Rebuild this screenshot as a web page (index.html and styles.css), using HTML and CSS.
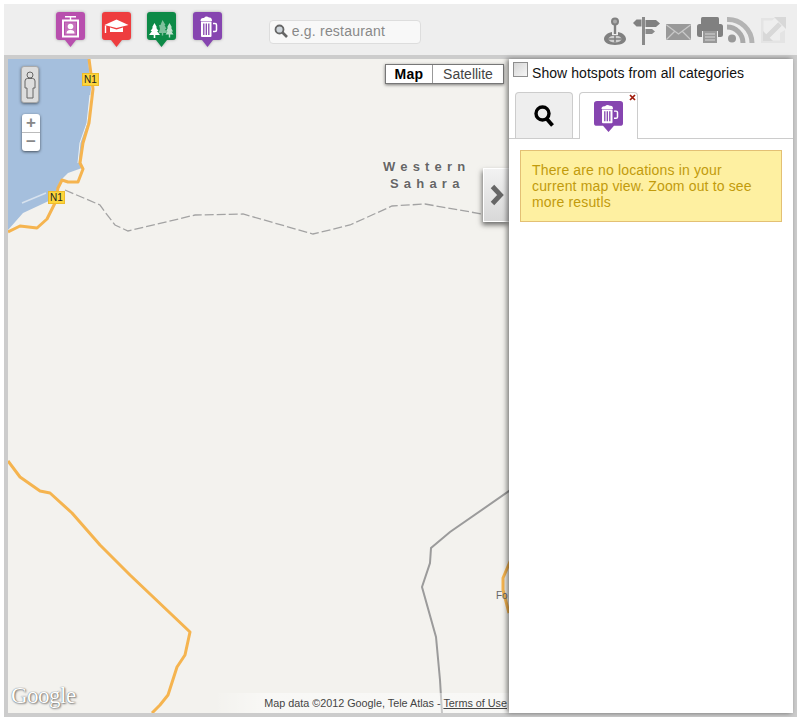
FILE: index.html
```html
<!DOCTYPE html>
<html lang="en">
<head>
<meta charset="utf-8">
<title>Hotspots map</title>
<link rel="stylesheet" href="styles.css">
</head>
<body>
<div class="app">
  <header class="toolbar">
    <div class="categories">
      <svg class="marker" width="29" height="35" viewBox="0 0 29 35">
        <path class="m-pink" d="M3 0H26a3 3 0 0 1 3 3V25a3 3 0 0 1-3 3H20L14.5 35 9 28H3a3 3 0 0 1-3-3V3a3 3 0 0 1 3-3Z"/>
        <path d="M9 4H20V5.500H15.200V8H13.800V5.500H9Z" fill="#fff"/>
        <rect x="7" y="8.500" width="15" height="16" fill="none" stroke="#fff" stroke-width="2"/>
        <rect x="9" y="10.500" width="11" height="12" fill="#c572bc"/>
        <circle cx="14.500" cy="14.500" r="2.800" fill="#fff"/>
        <path d="M10.500 21.500C10.500 18.500 12.500 18 14.500 18S18.500 18.500 18.500 21.500Z" fill="#fff"/>
      </svg>
      <svg class="marker" width="29" height="35" viewBox="0 0 29 35">
        <path class="m-red" d="M3 0H26a3 3 0 0 1 3 3V25a3 3 0 0 1-3 3H20L14.500 35 9 28H3a3 3 0 0 1-3-3V3a3 3 0 0 1 3-3Z"/>
        <path d="M14.500 7.500L26.500 13 14.500 16 2.500 13Z" fill="#fff"/>
        <path d="M8 15.500L14.500 17.500 21 15.500V20H8Z" fill="#fff"/>
        <path d="M3.500 13.500V21" stroke="#fff" stroke-width="1.400"/>
      </svg>
      <svg class="marker" width="29" height="35" viewBox="0 0 29 35">
        <path class="m-green" d="M3 0H26a3 3 0 0 1 3 3V25a3 3 0 0 1-3 3H20L14.500 35 9 28H3a3 3 0 0 1-3-3V3a3 3 0 0 1 3-3Z"/>
        <path d="M15.500 8L18.500 13 17.500 13 19.500 17 18 17 20 21H16.200V23.500H14.800V21H11.500L13 17 12 13 13.500 13Z" fill="#7fc09c"/>
        <path d="M22.500 11L25 15.500 24 15.500 26 19.500 24.500 19.500 26.500 22.500H23.200V25.500H21.800V22.500H18.500L20.500 19.500 19 19.500 21 15.500 20 15.500Z" fill="#bfe0cd"/>
        <path d="M7.500 11L10 15.500 9 15.500 11.500 19 10 19 13 23H8.300V26H6.700V23H2L5 19 3.500 19 6 15.500 5 15.500Z" fill="#fff"/>
      </svg>
      <svg class="marker" width="29" height="35" viewBox="0 0 29 35">
        <path class="m-purple" d="M3 0H26a3 3 0 0 1 3 3V25a3 3 0 0 1-3 3H20L14.500 35 9 28H3a3 3 0 0 1-3-3V3a3 3 0 0 1 3-3Z"/>
        <use href="#beer"/>
      </svg>
    </div>
    <div class="search">
      <svg width="14" height="14" viewBox="0 0 14 14"><circle cx="5.500" cy="5.500" r="4" fill="#cfd6dc" stroke="#666" stroke-width="1.800"/><path d="M8.500 8.500L13 13" stroke="#666" stroke-width="2.600"/></svg>
      <input class="search-input" type="text" placeholder="e.g. restaurant">
    </div>
    <div class="tools">
      <svg width="29" height="30" viewBox="0 0 29 30">
        <circle cx="11" cy="5.500" r="3" fill="#aaa" stroke="#808080" stroke-width="2"/><rect x="9.800" y="9" width="2.400" height="9" fill="#808080"/>
        <path d="M8 16C3 17 0 20 0 23S4 29 11 29 22 26 22 23 19 17 14 16V19H8Z" fill="#808080"/>
        <ellipse cx="11" cy="23" rx="6.500" ry="3.500" fill="#d0d0d0"/><path d="M11 19.500V26.500M4.500 23H17.500" stroke="#808080" stroke-width="1.600"/>
      </svg>
      <svg width="33" height="30" viewBox="0 0 33 30">
        <rect x="9" y="1" width="3" height="28" fill="#8a8a8a"/>
        <path d="M0 7L3.500 3.500H8.500V10.500H3.500Z" fill="#808080"/>
        <path d="M12.500 4H23L27 7.500 23 11H12.500Z" fill="#808080"/>
        <path d="M12.500 13H19L22 15.500 19 18H12.500Z" fill="#8a8a8a"/>
      </svg>
      <svg width="31" height="30" viewBox="0 0 31 30">
        <rect x="0" y="8" width="25" height="16" rx="1" fill="#999"/>
        <path d="M0.500 9L12.500 18 24.500 9M0.500 23.500L9 15M24.500 23.500L16 15" fill="none" stroke="#c9c9c9" stroke-width="1.200"/>
      </svg>
      <svg width="30" height="30" viewBox="0 0 30 30">
        <path d="M4 8V2.500Q4 1 5.500 1H20.500Q22 1 22 2.500V8Z" fill="#808080"/>
        <path d="M2.500 8H23.500Q26 8 26 10.500V19Q26 21 23.500 21H21V15H5V21H2.500Q0 21 0 19V10.500Q0 8 2.500 8Z" fill="#808080"/>
        <rect x="6" y="15" width="14" height="12" fill="#999"/>
        <path d="M8 18H18M8 21H18M8 24H18" stroke="#d5d5d5" stroke-width="1"/>
      </svg>
      <svg width="33" height="30" viewBox="0 0 33 30">
        <circle cx="5" cy="22.500" r="4" fill="#999"/>
        <path d="M0 11A16 16 0 0 1 16 27" fill="none" stroke="#aaa" stroke-width="5"/>
        <path d="M0 3.500A24 24 0 0 1 25 27" fill="none" stroke="#b4b4b4" stroke-width="5"/>
      </svg>
      <svg width="26" height="30" viewBox="0 0 26 30">
        <path d="M1 27V2H15L12 4.500H3.500V24.500H20V17L25 14V27Z" fill="#e4e4e4"/>
        <path d="M6 22L20 8" stroke="#d8d8d8" stroke-width="5"/>
        <path d="M14 1H26V13Z" fill="#d8d8d8"/>
        <path d="M3 15V25H13Z" fill="#d8d8d8"/>
      </svg>
    </div>
  </header>

  <main class="workspace">
    <section class="map">
      <svg class="map-canvas" width="501" height="654" viewBox="8 59 501 654">
        <path d="M8 59H88L91 89 89 106 88 123 83 143 80 163 82 168 68 173 60 181 53 199 23 213 8 230Z" fill="#a5bfdd"/>
        <path d="M90 95L87 123 80 143 78 163" fill="none" stroke="#f4f4f0" stroke-width="1"/>
        <path d="M22 203L46 193" stroke="#d7e2ee" stroke-width="1.500"/>
        <path d="M65 190L100 205 105 212 115 225 128 231 195 215 243 214 313 234 350 225 392 206 425 204 482 214" fill="none" stroke="#a3a3a3" stroke-width="1.300" stroke-dasharray="9 3"/>
        <g class="road">
          <path d="M89 59L93 89 91 106 89 123 83 143 80 163 83 169 78 182 68 182 62 180 58 188 55 203 47 219 37 228 20 226 8 232"/>
          <path d="M8 461L20 477 40 491 50 493 72 513 100 545 130 575 190 632 185 655 177 667 168 695 160 705 152 713"/>
          <path d="M512 557L503 578 503 590 509 613"/>
        </g>
        <path d="M512 489L450 532 431 548 430 563 422 587 436 637 440 680 442 713" fill="none" stroke="#9b9b9b" stroke-width="2"/>
      </svg>
      <span class="shield shield-top">N1</span>
      <span class="shield shield-low">N1</span>
      <div class="place-name">Western<br><span class="place-second">Sahara</span></div>
      <span class="town">Fo</span>
      <div class="pegman">
        <svg width="12" height="28" viewBox="0 0 12 28"><circle cx="6" cy="4" r="3" fill="none" stroke="#666"/><path d="M3.500 7.500H8.500Q11 7.500 11 10V17H9V27H3V17H1V10Q1 7.500 3.500 7.500Z" fill="none" stroke="#666"/></svg>
      </div>
      <div class="zoom">
        <span class="zoom-btn">+</span>
        <span class="zoom-btn">−</span>
      </div>
      <div class="map-type">
        <span class="map-type-btn map-type-active">Map</span>
        <span class="map-type-btn map-type-sat">Satellite</span>
      </div>
      <button class="toggle" type="button">
        <svg width="14" height="22" viewBox="0 0 14 22"><path d="M2.500 2.500L10.500 11 2.500 19.500" fill="none" stroke="#666" stroke-width="4.800"/></svg>
      </button>
      <div class="logo">Google</div>
      <div class="attribution">Map data ©2012 Google, Tele Atlas - <a class="terms" href="#">Terms of Use</a></div>
    </section>

    <aside class="panel">
      <label class="all-cats"><input class="all-check" type="checkbox"><span>Show hotspots from all categories</span></label>
      <div class="tabs">
        <div class="tab">
          <svg class="tab-search" width="20" height="22" viewBox="0 0 20 22"><circle cx="8.500" cy="8.500" r="6.500" fill="none" stroke="#000" stroke-width="3.400"/><path d="M12.500 13.500L18.500 20.500" stroke="#000" stroke-width="3.800"/></svg>
        </div>
        <div class="tab tab-active">
          <svg width="29" height="31" viewBox="0 0 29 35" preserveAspectRatio="none">
            <path class="m-purple" d="M3 0H26a3 3 0 0 1 3 3V25a3 3 0 0 1-3 3H20L14.500 35 9 28H3a3 3 0 0 1-3-3V3a3 3 0 0 1 3-3Z"/>
            <use href="#beer"/>
          </svg>
          <svg class="tab-close" width="7" height="7" viewBox="0 0 7 7"><path d="M1 1L6 6M6 1L1 6" stroke="#a01a0a" stroke-width="1.700"/></svg>
        </div>
      </div>
      <div class="notice">There are no locations in your current map view. Zoom out to see more resutls</div>
    </aside>
  </main>
</div>

<svg class="defs" width="0" height="0">
  <symbol id="beer" viewBox="0 0 29 35" width="29" height="35">
    <path d="M7.500 9Q7.500 5.500 11 6 13 3.500 16 5.500 19 5 19 9Z" fill="#fff"/>
    <path d="M8 9.500H18.500V24Q18.500 25 17.500 25H9Q8 25 8 24Z" fill="#fff"/>
    <path d="M10.800 11.500V23M13.300 11.500V23M15.800 11.500V23" stroke="#8645b0" stroke-width="1.300"/>
    <path d="M20 11.500H22Q23.500 11.500 23.500 13V18Q23.500 19.500 22 19.500H20" fill="none" stroke="#fff" stroke-width="1.500"/>
  </symbol>
</svg>
</body>
</html>
```

FILE: styles.css
```css
* { box-sizing: border-box; }

html, body { margin: 0; background: #fff; }

body {
  padding: 4px 0 0 4px;
  font-family: "Liberation Sans", Arial, sans-serif;
}

.app { width: 793px; }

.defs { position: absolute; }

/* Toolbar */
.toolbar {
  height: 51px;
  display: flex;
  align-items: flex-start;
  padding: 8px 11px 0 52px;
  background: #eee;
}

.categories { display: flex; gap: 16.6px; }

.marker { display: block; filter: drop-shadow(0 0 1.500px rgba(0, 0, 0, .3)); }

.m-pink { fill: #b84fae; }
.m-red { fill: #ee3d3f; }
.m-green { fill: #0d8a47; }
.m-purple { fill: #8645b0; }

.search {
  width: 152px;
  height: 24px;
  margin: 8px 0 0 47px;
  padding: 0 0 3px 4px;
  display: flex;
  align-items: center;
  gap: 4px;
  background: #f8f8f8;
  border: 1px solid #ddd;
  border-radius: 4px;
}

.search-input {
  width: 125px;
  height: 20px;
  padding: 0;
  border: 0;
  outline: 0;
  background: transparent;
  font: 14px "Liberation Sans", Arial, sans-serif;
  letter-spacing: .2px;
  color: #888;
}

.search-input::placeholder { color: #888; opacity: 1; }

.tools {
  margin: 4px 0 0 auto;
  display: flex;
}

.tools svg { display: block; }

/* Workspace */
.workspace {
  height: 662px;
  display: flex;
  border: 4px solid #ccc;
}

.map {
  position: relative;
  flex: 1;
  overflow: hidden;
  background: #f3f2ee;
}

.map-canvas { display: block; }

.road path {
  fill: none;
  stroke: #f5b44f;
  stroke-width: 3;
  stroke-linejoin: round;
}

.shield {
  position: absolute;
  width: 17px;
  height: 13px;
  background: #fdd53a;
  border: 1px solid #eebc2c;
  font-size: 10px;
  line-height: 12px;
  text-align: center;
  color: #222;
}

.shield-top { left: 74px; top: 14px; }
.shield-low { left: 40px; top: 132px; }

.place-name {
  position: absolute;
  left: 375px;
  top: 100px;
  font-size: 13px;
  font-weight: bold;
  line-height: 16.500px;
  letter-spacing: 5.200px;
  color: #666;
  text-shadow: 0 0 2px #fff;
  white-space: nowrap;
}

.place-second { margin-left: 7px; }

.town {
  position: absolute;
  left: 488px;
  top: 531px;
  font-size: 10px;
  color: #666;
}

.pegman {
  position: absolute;
  left: 13px;
  top: 7px;
  width: 18px;
  height: 37px;
  display: flex;
  align-items: center;
  justify-content: center;
  background: #ddd;
  border: 1px solid #aaa;
  border-radius: 3px;
  box-shadow: 0 1px 3px rgba(0, 0, 0, .5);
}

.zoom {
  position: absolute;
  left: 14px;
  top: 55px;
  width: 18px;
  height: 37px;
  display: flex;
  flex-direction: column;
  background: #fff;
  border-radius: 3px;
  box-shadow: 0 1px 3px rgba(0, 0, 0, .6);
}

.zoom-btn {
  flex: 1;
  font-size: 17px;
  font-weight: bold;
  line-height: 17px;
  text-align: center;
  color: #888;
}

.zoom-btn + .zoom-btn { border-top: 1px solid #bbb; }

.map-type {
  position: absolute;
  left: 377px;
  top: 5px;
  width: 119px;
  height: 20px;
  display: flex;
  background: #fff;
  border: 1px solid #777;
  box-shadow: 0 1px 3px rgba(0, 0, 0, .5);
  font-size: 14px;
  line-height: 18px;
  text-align: center;
  color: #444;
}

.map-type-btn { display: block; }
.map-type-active { width: 46px; font-weight: bold; letter-spacing: .3px; color: #000; }
.map-type-sat { flex: 1; border-left: 1px solid #999; }

.toggle {
  position: absolute;
  right: 0;
  top: 109px;
  width: 26px;
  height: 54px;
  padding: 0;
  display: flex;
  align-items: center;
  justify-content: center;
  background: linear-gradient(#f2f2f2, #d8d8d8);
  border: 1px solid #fff;
  border-right: 0;
  box-shadow: -1px 3px 5px rgba(0, 0, 0, .55);
}

.logo {
  position: absolute;
  left: 3px;
  bottom: 4px;
  font-family: "Liberation Serif", serif;
  font-size: 23px;
  line-height: 26px;
  letter-spacing: -.5px;
  color: #fff;
  text-shadow: 0 0 1px #555, 1px 1px 2px #777;
}

.attribution {
  position: absolute;
  right: 0;
  bottom: 0;
  width: 295px;
  height: 20px;
  padding: 4px 2px 0 0;
  background: linear-gradient(90deg, rgba(255, 255, 255, 0), rgba(255, 255, 255, .45) 50px);
  font-size: 10.800px;
  line-height: 12px;
  text-align: right;
  color: #444;
  white-space: nowrap;
}

.terms { color: #444; }

/* Side panel */
.panel {
  position: relative;
  width: 284px;
  flex: none;
  background: #fff;
  box-shadow: -2px 0 5px rgba(0, 0, 0, .5);
}

.all-cats {
  height: 33px;
  padding: 3px 0 0 4px;
  display: flex;
  align-items: flex-start;
  gap: 4px;
  font-size: 14px;
  line-height: 16px;
  letter-spacing: .06px;
  color: #111;
}

.all-check {
  width: 15px;
  height: 15px;
  margin: 0;
  appearance: none;
  background: linear-gradient(135deg, #d6d6d6, #f6f6f6);
  border: 1px solid #8e8e8e;
}

.all-cats span { margin-top: 3px; }

.tabs {
  height: 47px;
  padding-left: 6px;
  display: flex;
  gap: 6px;
  border-bottom: 1px solid #ccc;
}

.tab {
  position: relative;
  width: 58px;
  height: 46px;
  display: flex;
  align-items: center;
  justify-content: center;
  background: #eee;
  border: 1px solid #ccc;
  border-bottom: 0;
  border-radius: 4px 4px 0 0;
}

.tab-search { margin-top: 1px; }

.tab-active {
  width: 59px;
  height: 47px;
  background: #fff;
}

.tab-close { position: absolute; top: 1px; right: 1px; }

.notice {
  width: 262px;
  height: 72px;
  margin: 11px 0 0 11px;
  padding: 11px 20px 11px 11px;
  background: #fef0a1;
  border: 1px solid #e3c074;
  font-size: 14px;
  line-height: 16px;
  letter-spacing: .15px;
  color: #c29b0c;
}
```
